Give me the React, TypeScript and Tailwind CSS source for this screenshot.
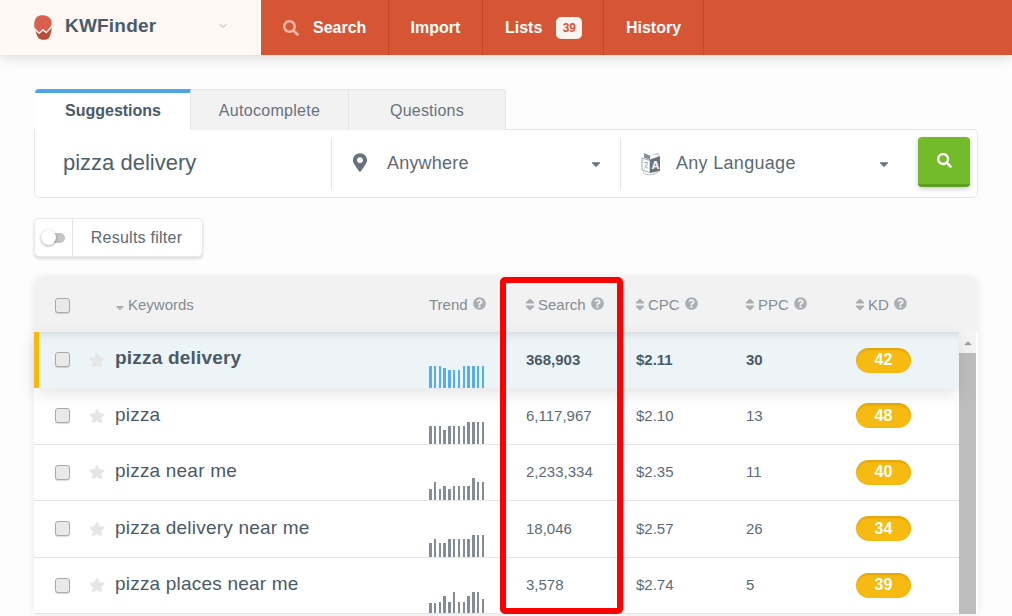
import { FaCaretDown, FaCaretUp, FaMapMarkerAlt, FaQuestionCircle, FaSearch, FaSort, FaStar } from 'react-icons/fa';
import { FiChevronDown } from 'react-icons/fi';

const rows = [
  { keyword: 'pizza delivery', search: '368,903', cpc: '$2.11', ppc: '30', kd: '42', trend: [22, 22, 22, 20, 18, 18, 18, 22, 22, 22, 22, 22] },
  { keyword: 'pizza', search: '6,117,967', cpc: '$2.10', ppc: '13', kd: '48', trend: [18, 18, 18, 14, 18, 18, 18, 18, 22, 22, 22, 22] },
  { keyword: 'pizza near me', search: '2,233,334', cpc: '$2.35', ppc: '11', kd: '40', trend: [11, 18, 11, 14, 11, 14, 14, 14, 14, 22, 18, 18] },
  { keyword: 'pizza delivery near me', search: '18,046', cpc: '$2.57', ppc: '26', kd: '34', trend: [14, 18, 14, 14, 18, 18, 18, 18, 18, 22, 22, 22] },
  { keyword: 'pizza places near me', search: '3,578', cpc: '$2.74', ppc: '5', kd: '39', trend: [10, 10, 11, 17, 11, 21, 11, 11, 17, 21, 21, 14] },
];

function Logo() {
  return (
    <svg width="18" height="25" viewBox="0 0 18 25">
      <path d="M.5 13C-.5 7 1 1.500 6 .5c4-1 9 .5 11 4 1 2 .8 5-.3 7.200L12.300 17.600 9 15l-4 3.300z" fill="#d9604f" />
      <path d="M1 14.300l4 4L9 15l3.300 2.600 5.400-5.900c.2 4-1 8-2.700 11.300-1.500 2-7.500 2.500-10 .5C2.800 21.500 2.200 18 1 14.300z" fill="#b94b39" />
      <path d="M.6 13.800l4.400 4.500L9 15l3.300 2.600 5.400-5.900" fill="none" stroke="#fff8f5" strokeWidth="1.400" />
    </svg>
  );
}

function LanguageIcon() {
  return (
    <svg width="20" height="24" viewBox="0 0 20 24">
      <path d="M1 6l8 2.500v12L1 18z" fill="#fff" stroke="#a3a9ae" strokeWidth="1" />
      <path d="M3 1l8 3.500h-2L9 8 3 5.500z" fill="#8a9299" />
      <path d="M9 7.500L19 4v15l-10 2z" fill="#69747d" />
      <path d="M12 3l5-1.500V4M2 20.500c4 3 10 3 15-.5" fill="none" stroke="#b5babf" strokeWidth="1" />
      <path d="M3 10.500h4M5 10v1.500M6.500 11.500c-.5 2.500-2 4-3.500 5M4 13c.5 1.500 1.500 2.500 3 3" fill="none" stroke="#a3a9ae" strokeWidth=".9" />
      <text x="10.500" y="16.500" fontSize="11" fontWeight="700" fill="#fff" fontFamily="'Liberation Sans', sans-serif">A</text>
    </svg>
  );
}

function Checkbox() {
  return <div className="h-[15px] w-[15px] rounded-[3px] border border-[#aaaaaa] bg-[#e9e9e9] shadow-[0_1px_1px_rgba(0,0,0,0.15)]" />;
}

function HeaderLabel({ label, width, sort = true }: { label: string; width: string; sort?: boolean }) {
  return (
    <div className={`flex items-center ${width}`}>
      {sort && <FaSort className="mr-[3px] h-[15px] w-[10px] text-[#a9aeb3]" />}
      <span className="mt-[2px]">{label}</span>
      <FaQuestionCircle className="mb-[2px] ml-[5px] h-[13px] w-[13px] text-[#a9aeb3]" />
    </div>
  );
}

export default function App() {
  return (
    <div className="relative h-[616px] w-[1012px] overflow-hidden bg-[#fdfdfd] font-['Liberation_Sans',Arial,sans-serif] text-[#4a5a66]">
      {/* Top nav */}
      <header className="flex h-[55px] bg-[#d65535] shadow-[0_3px_12px_rgba(0,0,0,0.14)]">
        <div className="flex w-[261px] items-center bg-[#fff8f5] pl-[34px]">
          <Logo />
          <span className="mb-[2px] ml-[13px] text-[19px] font-bold tracking-[0.2px] text-[#4b5c68]">KWFinder</span>
          <FiChevronDown className="mb-[4px] ml-[61px] h-[12px] w-[12px] text-[#a9aeb3]" />
        </div>
        <nav className="flex text-[16px] font-bold text-white">
          <a className="flex w-[128px] items-center border-r border-[#c2482b] pl-[22px]">
            <FaSearch className="mr-[14px] h-[16px] w-[16px] text-[#f0b5a4]" />
            Search
          </a>
          <a className="flex w-[94px] items-center justify-center border-r border-[#c2482b]">Import</a>
          <a className="flex w-[121px] items-center border-r border-[#c2482b] pl-[22px]">
            Lists
            <span className="ml-[14px] flex h-[22px] w-[26px] items-center justify-center rounded-[5px] bg-[#faf3f0] text-[12px] text-[#d65535]">39</span>
          </a>
          <a className="flex w-[100px] items-center justify-center border-r border-[#c2482b]">History</a>
        </nav>
      </header>

      <main className="px-[34px]">
        {/* Tabs */}
        <div className="mt-[34px] flex h-[41px] pl-px text-[16px]">
          <div className="flex w-[156px] items-center justify-center rounded-tl-[4px] border-t-[4px] border-r border-[#4ea6e8] border-r-[#e5e5e5] bg-white pb-[2px] pl-[1px] font-bold text-[#4a5a66]">Suggestions</div>
          <div className="flex w-[158px] items-center justify-center border-r border-t border-[#e5e5e5] bg-[#f2f2f2] pt-px tracking-[0.3px] text-[#66737d]">Autocomplete</div>
          <div className="flex w-[157px] items-center justify-center rounded-tr-[4px] border-r border-t border-[#e5e5e5] bg-[#f2f2f2] pt-px tracking-[0.2px] text-[#66737d]">Questions</div>
        </div>

        {/* Search box */}
        <div className="-mt-px flex h-[69px] w-[944px] items-center rounded-b-[5px] rounded-tr-[5px] border border-[#e5e5e5] bg-white">
          <div className="flex h-[52px] w-[297px] items-center border-r border-[#e5e5e5] pb-[2px] pl-[28px] text-[22px] text-[#4f5f6b]">pizza delivery</div>
          <div className="flex h-[52px] w-[289px] items-center border-r border-[#e5e5e5] pl-[21px] text-[#5c6a76]">
            <FaMapMarkerAlt className="mb-[2px] h-[19px] w-[14px] text-[#66727c]" />
            <span className="mb-[1px] ml-[20px] flex-1 text-[18px] tracking-[0.2px]">Anywhere</span>
            <FaCaretDown className="mr-[18px] h-[14px] w-[12px] text-[#66727c]" />
          </div>
          <div className="flex h-[52px] w-[297px] items-center pl-[20px] text-[#5c6a76]">
            <LanguageIcon />
            <span className="mb-[1px] ml-[15px] flex-1 text-[18px] tracking-[0.3px]">Any Language</span>
            <FaCaretDown className="mr-[28px] h-[14px] w-[12px] text-[#66727c]" />
          </div>
          <button className="mb-[4px] flex h-[50px] w-[52px] items-center justify-center rounded-[4px] border-b-[3px] border-[#5f9e22] bg-[#74bb2c] shadow-[0_2px_5px_rgba(0,0,0,0.2)]">
            <FaSearch className="h-[15px] w-[15px] text-white" />
          </button>
        </div>

        {/* Results filter */}
        <div className="mt-[20px] flex h-[39px] w-[169px] items-center rounded-[5px] border border-[#e8e8e8] bg-white shadow-[0_2px_3px_rgba(0,0,0,0.14)]">
          <div className="flex h-full w-[38px] items-center border-r border-[#e5e5e5] pl-[6px]">
            <div className="flex h-[10px] w-[24px] items-center rounded-full bg-[#c4c4c4]">
              <div className="h-[15px] w-[15px] rounded-full bg-white shadow-[0_1px_3px_rgba(0,0,0,0.35)]" />
            </div>
          </div>
          <span className="flex-1 pr-[2px] text-center text-[16px] tracking-[0.25px] text-[#5c6a76]">Results filter</span>
        </div>

        {/* Table */}
        <section className="mt-[20px] w-[944px] rounded-t-[10px] bg-white shadow-[0_0_8px_rgba(0,0,0,0.09)]">
          <div className="flex h-[55px] items-center rounded-t-[10px] bg-[#f2f2f2] text-[15px] text-[#858d94]">
            <div className="mt-[2px] flex w-[81px] pl-[21px]"><Checkbox /></div>
            <div className="flex w-[314px] items-center">
              <FaCaretDown className="mr-[3px] mt-[5px] h-[13px] w-[10px] text-[#a9aeb3]" />
              <span className="mt-[2px]">Keywords</span>
            </div>
            <HeaderLabel label="Trend" width="w-[96px]" sort={false} />
            <HeaderLabel label="Search" width="w-[110px]" />
            <HeaderLabel label="CPC" width="w-[110px]" />
            <HeaderLabel label="PPC" width="w-[110px]" />
            <HeaderLabel label="KD" width="w-[100px]" />
          </div>

          <div className="flex">
            <div className="w-[925px]">
              {rows.map((row, i) => {
                const active = i === 0;
                return (
                  <div
                    key={row.keyword}
                    className={active
                      ? 'relative flex h-[56px] items-center border-l-[5px] border-[#f8b90f] bg-[#edf4f8] font-bold shadow-[0_6px_16px_rgba(0,0,0,0.1),inset_0_9px_8px_-7px_rgba(0,0,0,0.12)]'
                      : 'flex h-[56.500px] items-center border-b border-[#e5e5e5] bg-white pl-[5px]'}
                  >
                    <div className={`flex w-[76px] items-center pl-[16px] ${active ? 'mb-[2px]' : ''}`}>
                      <Checkbox />
                      <FaStar className={`ml-[19px] h-[16px] w-[16px] text-[#e6e6e6] ${active ? 'mt-[2px]' : ''}`} />
                    </div>
                    <div className={`w-[314px] text-[19px] tracking-[0.2px] text-[#4a5a66] ${active ? 'mb-[4px]' : 'mb-[2px] font-normal'}`}>{row.keyword}</div>
                    <div className="flex h-full w-[97px] items-end gap-[2.300px] self-end">
                      {row.trend.map((h, j) => (
                        <div key={j} className={`w-[2.500px] ${active ? 'bg-[#55aeee]' : 'bg-[#848d95]'}`} style={{ height: h }} />
                      ))}
                    </div>
                    <div className={`w-[110px] text-[15px] ${active ? 'text-[#4a5a66]' : 'text-[#5c6a76]'}`}>{row.search}</div>
                    <div className={`w-[110px] text-[15px] ${active ? 'text-[#4a5a66]' : 'text-[#5c6a76]'}`}>{row.cpc}</div>
                    <div className={`w-[110px] text-[15px] ${active ? 'text-[#4a5a66]' : 'text-[#5c6a76]'}`}>{row.ppc}</div>
                    <div className="flex h-[25px] w-[55px] items-center justify-center rounded-full bg-[#f7ba12] text-[16px] font-bold text-white shadow-[inset_0_2px_2px_rgba(190,130,0,0.35)]">{row.kd}</div>
                  </div>
                );
              })}
            </div>
            {/* Scrollbar */}
            <div className="flex w-[17px] flex-col">
              <div className="flex h-[21px] items-center justify-center bg-[#f4f4f4]">
                <FaCaretUp className="h-[12px] w-[12px] text-[#a3a3a3]" />
              </div>
              <div className="flex-1 bg-[#bdbdbd]" />
            </div>
          </div>
        </section>
      </main>

      {/* Red highlight drawn over the Search column */}
      <div className="absolute left-[500px] top-[277px] h-[337px] w-[123px] rounded-[5px] border-[6px] border-[#ff0000]" />
    </div>
  );
}
